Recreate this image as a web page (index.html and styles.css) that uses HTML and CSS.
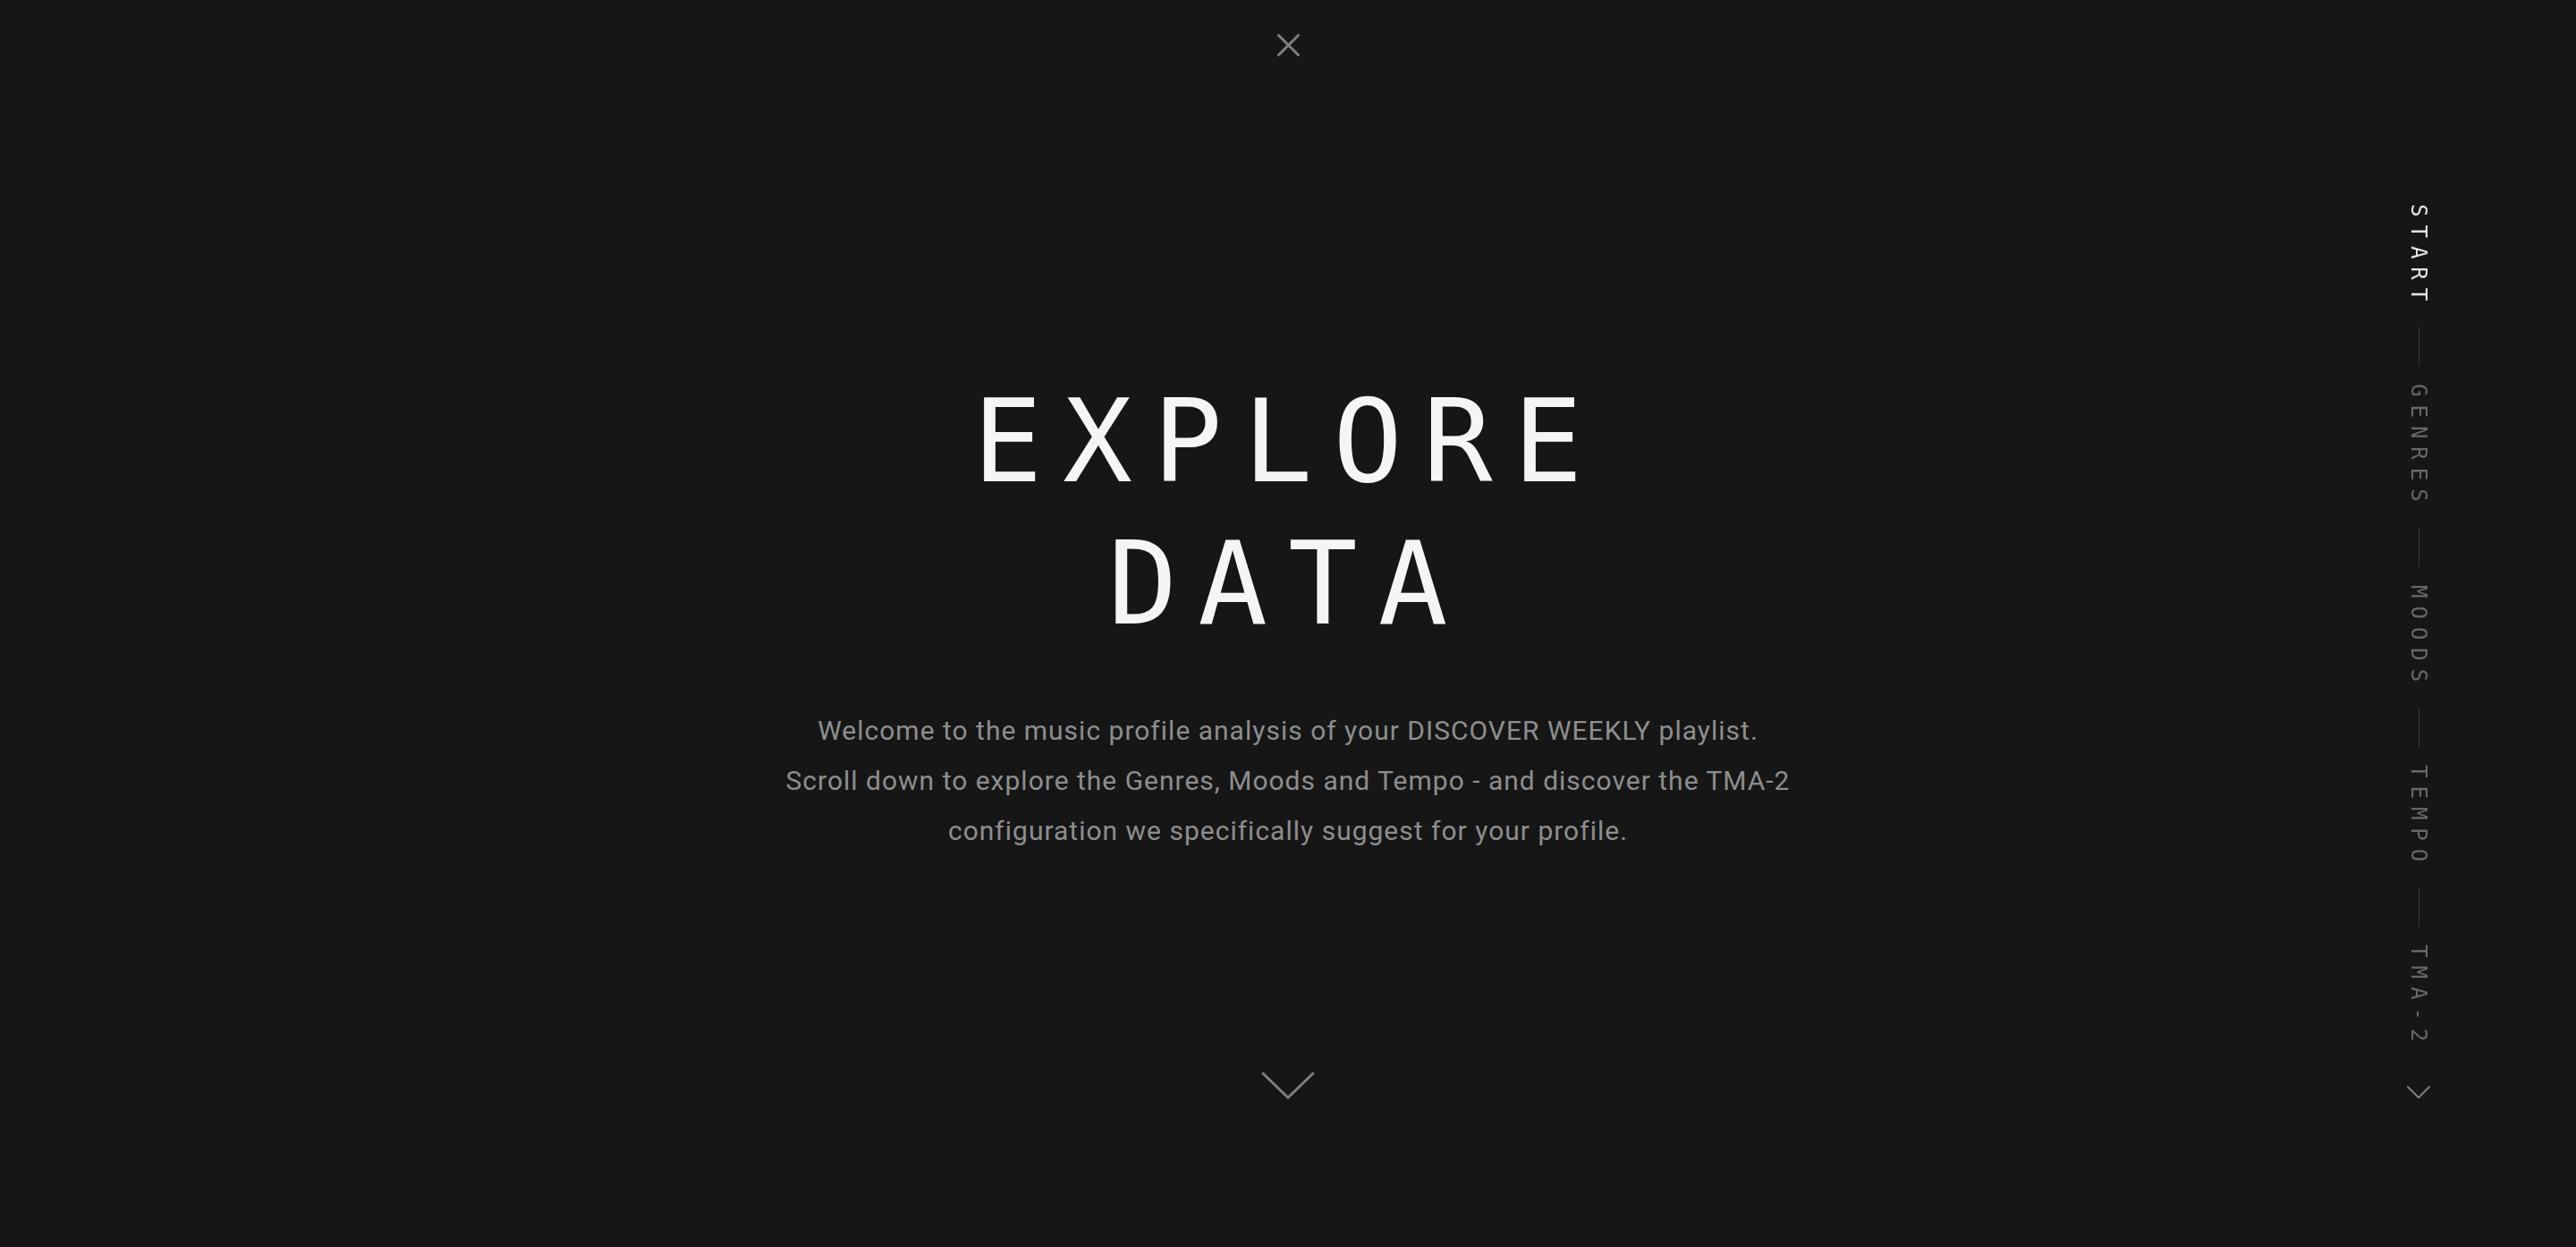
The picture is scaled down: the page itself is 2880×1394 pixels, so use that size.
FILE: index.html
```html
<!DOCTYPE html>
<html lang="en">
<head>
  <meta charset="UTF-8" />
  <title>Explore Data</title>
  <link rel="stylesheet" href="styles.css">
</head>
<body>
  <div class="page">
    <header class="top">
      <button class="icon-btn close" aria-label="Close">
        <svg width="25" height="25" viewBox="0 0 25 25">
          <path d="M1.5 1.5 L23.5 23.5 M23.5 1.5 L1.5 23.5" />
        </svg>
      </button>
    </header>

    <main class="hero">
      <h1 class="title">EXPLORE<br>DATA</h1>
      <p class="intro">
        Welcome to the music profile analysis of your DISCOVER WEEKLY playlist.<br>
        Scroll down to explore the Genres, Moods and Tempo - and discover the TMA-2<br>
        configuration we specifically suggest for your profile.
      </p>
      <button class="icon-btn scroll-down" aria-label="Scroll down">
        <svg width="60" height="31" viewBox="0 0 60 31">
          <path d="M2 2 L30 29 L58 2" />
        </svg>
      </button>
    </main>
  </div>

  <nav class="steps">
    <a class="step active" href="#start">START</a>
    <span class="rule"></span>
    <a class="step" href="#genres">GENRES</a>
    <span class="rule"></span>
    <a class="step" href="#moods">MOODS</a>
    <span class="rule"></span>
    <a class="step" href="#tempo">TEMPO</a>
    <span class="rule"></span>
    <a class="step" href="#tma2">TMA-2</a>
    <button class="icon-btn next" aria-label="Next section">
      <svg width="26" height="15" viewBox="0 0 26 15">
        <path d="M1 1 L13 13 L25 1" />
      </svg>
    </button>
  </nav>
</body>
</html>
```

FILE: styles.css
```css
* {
  margin: 0;
  padding: 0;
  box-sizing: border-box;
}

html, body {
  height: 100%;
}

body {
  background: #161616;
  color: #f5f5f5;
  font-family: Roboto, 'Liberation Sans', sans-serif;
  overflow: hidden;
}

.page {
  min-height: 100vh;
  display: flex;
  flex-direction: column;
  align-items: center;
}

.icon-btn {
  background: none;
  border: none;
  cursor: pointer;
  display: block;
}

.icon-btn svg {
  display: block;
  fill: none;
  stroke: #7f7f7f;
  stroke-width: 3;
  stroke-linecap: round;
  stroke-linejoin: round;
}

.top {
  padding-top: 38px;
}

.hero {
  display: flex;
  flex-direction: column;
  align-items: center;
  text-align: center;
}

.title {
  margin-top: 351px;
  font-family: 'DejaVu Sans Mono', monospace;
  font-weight: 400;
  font-size: 129px;
  line-height: 159px;
  letter-spacing: 23px;
  color: #f5f5f5;
}

.intro {
  margin-top: 57px;
  font-size: 30px;
  line-height: 56px;
  letter-spacing: 1px;
  color: #8e8e8e;
}

.scroll-down {
  margin-top: 241px;
}

/* side navigation */
.steps {
  position: fixed;
  top: 228px;
  right: 156px;
  width: 40px;
  display: flex;
  flex-direction: column;
  align-items: center;
  gap: 20px;
}

.step {
  writing-mode: vertical-rl;
  font-family: 'DejaVu Sans Mono', monospace;
  font-size: 24px;
  letter-spacing: 9px;
  color: #686868;
  text-decoration: none;
}

.step.active {
  color: #e4e4e4;
}

.rule {
  width: 1px;
  height: 44px;
  background: #363636;
}

.next {
  margin-top: 20px;
}

.next svg {
  stroke-width: 2;
}
```
